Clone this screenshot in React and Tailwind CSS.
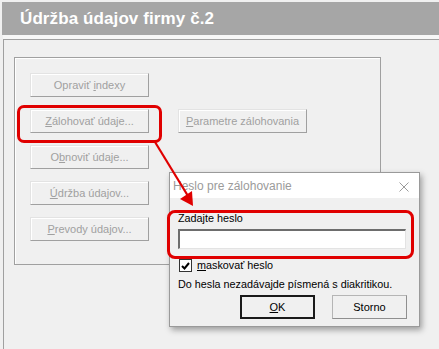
import React from "react";

const U = ({ children }) => <span className="underline underline-offset-[1px]">{children}</span>;

function WinButton({ children, className = "" }) {
  return (
    <div
      className={`h-[24px] flex items-center justify-center bg-[#f0f0f0] border border-t-[#e3e3e3] border-l-[#e3e3e3] border-r-[#a0a0a0] border-b-[#a0a0a0] shadow-[inset_1px_1px_0_#ffffff] text-[11px] text-[#a0a0a0] ${className}`}
    >
      <span>{children}</span>
    </div>
  );
}

function PasswordDialog() {
  return (
    <div className="absolute left-[169px] top-[172px] w-[251px] h-[155px] border border-[#9a9a9a] bg-[#f0f0f0] shadow-[2px_3px_6px_rgba(0,0,0,0.35)] flex flex-col">
      <div className="h-[25px] bg-white flex items-center justify-between pl-[3px] pr-[10px]">
        <span className="text-[12px] text-[#9b9b9b]">Heslo pre zálohovanie</span>
        <svg width="10" height="10" viewBox="0 0 10 10" className="mt-[2px]">
          <path d="M0.5 0.5 L9.5 9.5 M9.5 0.5 L0.5 9.5" stroke="#9b9b9b" strokeWidth="1" />
        </svg>
      </div>
      <div className="flex flex-col pl-[8px] pr-[12px] pt-[14px] text-[10.8px] text-black">
        <div className="leading-[13px]">Zadajte heslo</div>
        <div className="mt-[4px] h-[20px] w-[228px] bg-white border-t-2 border-l-2 border-t-[#6d6d6d] border-l-[#6d6d6d] border-r border-b border-r-[#e3e3e3] border-b-[#e3e3e3]" />
        <div className="mt-[10px] flex items-center gap-[5px] pl-[1px] leading-[13px]">
          <div className="w-[13px] h-[13px] bg-white border border-[#333333] flex items-center justify-center">
            <svg width="9" height="8" viewBox="0 0 9 8">
              <path d="M1 4 L3.5 6.5 L8 1" fill="none" stroke="#000000" strokeWidth="2" />
            </svg>
          </div>
          <span>
            <U>m</U>askovať heslo
          </span>
        </div>
        <div className="mt-[6px] leading-[13px]">Do hesla nezadávajde písmená s diakritikou.</div>
        <div className="mt-[4px] flex justify-end gap-[17px]">
          <div className="w-[75px] h-[24px] flex items-center justify-center bg-[#f0f0f0] border-2 border-[#1a1a1a] text-[11px]">
            <span>
              <U>O</U>K
            </span>
          </div>
          <div className="w-[75px] h-[24px] flex items-center justify-center bg-[#f0f0f0] border border-[#b5b5b5] border-b-[#8f8f8f] border-r-[#8f8f8f] text-[11px]">
            Storno
          </div>
        </div>
      </div>
    </div>
  );
}

export default function App() {
  return (
    <div className="relative w-[439px] h-[349px] overflow-hidden bg-[#f0f0f0] font-['Liberation_Sans',Arial,sans-serif]">
      <div className="pt-[2px] pl-[2px]">
        <div className="h-[33px] bg-[#a6a6a6] pl-[18px] flex items-center text-white font-bold text-[17px] tracking-[0.1px]">
          Údržba údajov firmy č.2
        </div>
      </div>
      <div className="h-[4px] bg-[#f7f7f7] ml-[3px]" />
      <div className="ml-[3px] h-[310px] border-l border-t border-[#a0a0a0] pl-[10px] pt-[17px]">
        <div className="w-[367px] h-[208px] border border-[#a0a0a0] shadow-[inset_1px_1px_0_#ffffff] pl-[15px] pt-[15px] flex flex-col gap-[12px]">
          <WinButton className="w-[119px]">
            Opraviť <U>i</U>ndexy
          </WinButton>
          <div className="flex gap-[29px]">
            <WinButton className="w-[119px]">
              <U>Z</U>álohovať údaje...
            </WinButton>
            <WinButton className="w-[129px]">
              <U>P</U>arametre zálohovania
            </WinButton>
          </div>
          <WinButton className="w-[119px]">
            O<U>b</U>noviť údaje...
          </WinButton>
          <WinButton className="w-[119px]">
            <U>Ú</U>držba údajov...
          </WinButton>
          <WinButton className="w-[119px]">
            <U>P</U>revody údajov...
          </WinButton>
        </div>
      </div>

      <PasswordDialog />

      {/* annotation highlights */}
      <div className="absolute left-[17px] top-[105px] w-[145px] h-[38px] border-[3px] border-[#e00000] rounded-[7px]" />
      <div className="absolute left-[167px] top-[210px] w-[247px] h-[49px] border-[3px] border-[#e00000] rounded-[8px]" />
      <svg className="absolute left-0 top-0" width="439" height="349" viewBox="0 0 439 349">
        <line x1="155" y1="142" x2="188" y2="196" stroke="#e00000" strokeWidth="2.2" />
        <polygon points="193,206 180,199 192,191" fill="#e00000" />
      </svg>
    </div>
  );
}
